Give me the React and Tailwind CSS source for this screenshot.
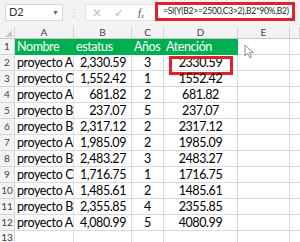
const rows = [
  ["proyecto A", "2,330.59", "3", "2330.59"],
  ["proyecto C", "1,552.42", "1", "1552.42"],
  ["proyecto A", "681.82", "2", "681.82"],
  ["proyecto B", "237.07", "5", "237.07"],
  ["proyecto B", "2,317.12", "2", "2317.12"],
  ["proyecto A", "1,985.09", "2", "1985.09"],
  ["proyecto B", "2,483.27", "3", "2483.27"],
  ["proyecto C", "1,716.75", "1", "1716.75"],
  ["proyecto A", "1,485.61", "2", "1485.61"],
  ["proyecto B", "2,355.85", "4", "2355.85"],
  ["proyecto A", "4,080.99", "5", "4080.99"],
];

const cols = "grid grid-cols-[15px_59px_58px_32px_74px_52px_10px]";
const cell = "h-[16px] text-[12.5px] leading-[15px] tracking-[-0.4px]";

const Cursor = () => (
  <svg
    className="absolute left-[244px] top-[44px]"
    width="11"
    height="15"
    viewBox="0 0 11 15"
  >
    <path
      d="M1 1 L1 12 L3.8 9.4 L5.8 13.8 L7.6 13 L5.6 8.7 L9.4 8.7 Z"
      fill="#fff"
      stroke="#8a8a8a"
      strokeWidth="1"
      strokeLinejoin="round"
    />
  </svg>
);

export default function App() {
  return (
    <div
      className="relative w-[300px] h-[242px] overflow-hidden bg-white text-black"
      style={{ fontFamily: "Lato, 'Open Sans', sans-serif" }}
    >
      {/* formula bar */}
      <div className="h-[27px] bg-[#f3f3f3] flex items-start pt-[4px]">
        <div className="ml-[5px] w-[58px] h-[17px] bg-white border border-[#d6d6d6] flex items-center justify-between px-[3px] text-[11px] text-[#333]">
          <span>D2</span>
          <span className="text-[7px] text-[#666]">▼</span>
        </div>
        <div className="w-[22px] h-[17px] flex items-center justify-center text-[10px] text-[#c6c6c6]">
          ⋮
        </div>
        <div className="w-[70px] h-[17px] bg-white border border-[#e2e2e2] border-r-0 flex items-center text-[#bdbdbd]">
          <span className="w-[22px] text-center text-[12px]">✕</span>
          <span className="w-[22px] text-center text-[12px]">✓</span>
          <span
            className="w-[22px] text-center text-[11px] italic text-[#555]"
            style={{ fontFamily: "'Liberation Serif', serif" }}
          >
            f<sub className="text-[7px]">x</sub>
          </span>
        </div>
        <div className="-mt-[2px] w-[140px] h-[19px] bg-white border-[3px] border-[#e3202b] flex items-center pl-[5px] text-[8.5px] tracking-[-0.25px] text-[#222] whitespace-nowrap">
          =SI(Y(B2&gt;=2500,C3&gt;2),B2*90%,B2)
        </div>
      </div>

      {/* column headers */}
      <div className={`${cols} h-[12px] bg-[#f3f3f3] border-b border-[#c8c8c8] text-[10px] text-[#444] leading-[11px]`}>
        <div className="relative border-r border-[#d4d4d4]">
          <div className="absolute right-[2px] bottom-[1px] w-0 h-0 border-l-[7px] border-l-transparent border-b-[7px] border-b-[#c9c9c9]" />
        </div>
        {["A", "B", "C", "D", "E", ""].map((c, i) => (
          <div key={i} className="text-center border-r border-[#d4d4d4]">
            {c}
          </div>
        ))}
      </div>

      {/* row 1 */}
      <div className={`${cols} ${cell}`}>
        <div className="bg-[#f3f3f3] border-r border-b border-[#d4d4d4] text-[10px] tracking-normal text-[#444] text-center leading-[15px]">
          1
        </div>
        <div className="bg-[#00b050] text-white pl-[2px]">Nombre</div>
        <div className="bg-[#00b050] text-white pl-[2px]">estatus</div>
        <div className="bg-[#00b050] text-white pl-[2px]">Años</div>
        <div className="bg-[#00b050] text-white pl-[2px]">Atención</div>
        <div className="border-r border-b border-[#dadada]" />
        <div className="border-b border-[#dadada]" />
      </div>

      {rows.map((r, i) => (
        <div key={i} className={`${cols} ${cell}`}>
          <div className="bg-[#f3f3f3] border-r border-b border-[#d4d4d4] text-[10px] tracking-normal text-[#444] text-center leading-[15px]">
            {i + 2}
          </div>
          <div className="border-r border-b border-[#dadada] pl-[2px] whitespace-nowrap">
            {r[0]}
          </div>
          <div className="border-r border-b border-[#dadada] text-right pr-[5px]">
            {r[1]}
          </div>
          <div className="border-r border-b border-[#dadada] text-center">
            {r[2]}
          </div>
          <div className="relative border-r border-b border-[#dadada] text-center">
            {r[3]}
            {i === 0 && (
              <div className="absolute left-[5px] top-[1px] w-[64px] h-[19px] border-[3px] border-[#e3202b]" />
            )}
          </div>
          <div className="border-r border-b border-[#dadada]" />
          <div className="border-b border-[#dadada]" />
        </div>
      ))}

      <div className={`${cols} h-[16px]`}>
        <div className="bg-[#f3f3f3] border-r border-[#d4d4d4] text-[10px] text-[#444] text-center leading-[13px]">
          13
        </div>
        <div className="border-r border-[#dadada]" />
        <div className="border-r border-[#dadada]" />
        <div className="border-r border-[#dadada]" />
        <div className="border-r border-[#dadada]" />
        <div className="border-r border-[#dadada]" />
        <div />
      </div>

      <Cursor />
    </div>
  );
}
